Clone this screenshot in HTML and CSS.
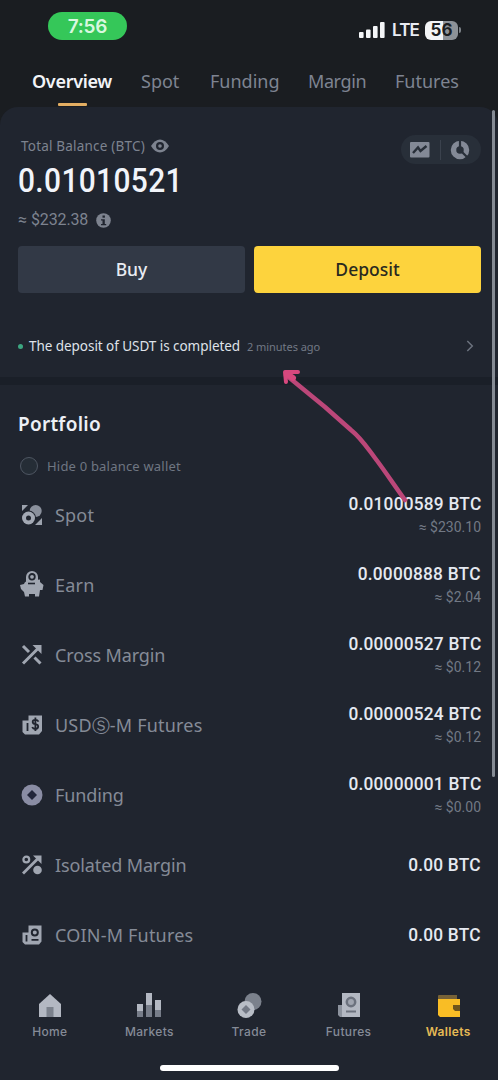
FILE: index.html
```html
<!DOCTYPE html>
<html lang="en">
<head>
<meta charset="utf-8">
<title>Wallets</title>
<link rel="stylesheet" href="styles.css">
</head>
<body>
<div class="screen">
  <header class="status">
    <div class="time">7:56</div>
    <div class="signals">
      <svg width="26" height="16" viewBox="0 0 26 16" fill="#f4f6f8"><rect x="0" y="10" width="4.600" height="6" rx="1"/><rect x="7" y="7.500" width="4.600" height="8.500" rx="1"/><rect x="14" y="4" width="4.600" height="12" rx="1"/><rect x="21" y="0" width="4.600" height="16" rx="1"/></svg>
      <span class="lte">LTE</span>
      <span class="battery">56</span>
      <span class="cap"></span>
    </div>
  </header>
  <nav class="tabs">
    <span class="tab active">Overview</span><span class="tab">Spot</span><span class="tab">Funding</span><span class="tab margin">Margin</span><span class="tab">Futures</span>
  </nav>
  <main class="panel">
    <section class="balance">
      <div class="head">
        <div class="total">Total Balance (BTC)
          <svg width="18" height="14" viewBox="0 0 18 14"><path d="M0 7Q4 .5 9 .5T18 7Q14 13.500 9 13.500T0 7Z" fill="#7d838f"/><circle cx="9" cy="7" r="4" fill="#20252f"/><circle cx="9" cy="7" r="1.800" fill="#7d838f"/></svg>
        </div>
        <div class="toggle">
          <svg width="20" height="16" viewBox="0 0 20 16"><rect width="19.500" height="15.500" rx="1" fill="#838996"/><path d="M3 11L8 5.500L10.500 9L16.500 4" fill="none" stroke="#282f39" stroke-width="2.400"/></svg>
          <i class="rule"></i>
          <svg width="20" height="20" viewBox="0 0 20 20"><circle cx="10" cy="10" r="6.500" fill="none" stroke="#838996" stroke-width="5.500"/><path d="M10 10V0M10 10L18 18" stroke="#282f39" stroke-width="2.200"/></svg>
        </div>
      </div>
      <div class="amount">0.01010521</div>
      <div class="fiat">≈ <span>$232.38</span>
        <svg width="15" height="15" viewBox="0 0 15 15"><circle cx="7.500" cy="7.500" r="7.300" fill="#7d838f"/><rect x="6.500" y="2.500" width="2.400" height="2.200" fill="#20252f"/><path d="M5 6.200H8.800V11H10.200V12.300H5V11H6.500V7.500H5Z" fill="#20252f"/></svg>
      </div>
      <div class="buttons"><div class="btn">Buy</div><div class="btn primary">Deposit</div></div>
      <div class="notice">
        <i class="dot"></i><span class="msg">The deposit of USDT is completed</span><span class="ago">2 minutes ago</span>
        <svg class="chev" width="8" height="12" viewBox="0 0 8 12"><path d="M1.300 1L6.300 6L1.300 11" fill="none" stroke="#6b727e" stroke-width="1.500"/></svg>
      </div>
    </section>
    <section class="portfolio">
      <h2>Portfolio</h2>
      <div class="hide"><i class="radio"></i><span>Hide 0 balance wallet</span></div>
      <div class="rows">
        <div class="row">
          <svg class="ico" viewBox="0 0 22 22"><circle cx="14.700" cy="7" r="6" fill="#8a909c"/><path d="M1 1H7L1 7ZM21 14V21H14Z" fill="#9ca2ad"/><circle cx="7.500" cy="14" r="7.600" fill="#20252f"/><circle cx="7.500" cy="14" r="6.500" fill="#a3a9b4"/><circle cx="7.500" cy="14" r="2.500" fill="#20252f"/></svg>
          <span class="name">Spot</span><div class="vals"><b>0.01000589 BTC</b><small>≈ $230.10</small></div>
        </div>
        <div class="row">
          <svg class="ico tall" viewBox="0 0 24 26"><path d="M6 14V6A6 6 0 0 1 18 6V14" fill="#a0a6b1"/><path d="M0 14L4 13Q5 9.500 10 9.500H16Q18 8.500 20 8.500V11L23.500 14L22.500 19H20L19 25.500H15V23H9V25.500H5L4 21L1 18Z" fill="#a0a6b1"/><circle cx="12" cy="5.800" r="2.800" fill="none" stroke="#20252f" stroke-width="1.800"/><path d="M8 12.500H15" stroke="#20252f" stroke-width="1.600"/></svg>
          <span class="name">Earn</span><div class="vals"><b>0.0000888 BTC</b><small>≈ $2.04</small></div>
        </div>
        <div class="row">
          <svg class="ico" viewBox="0 0 22 22"><path d="M2 2L8 8M13.500 13.500L19.500 19.500M2 19.500L17 4.500" stroke="#a0a6b1" stroke-width="3" fill="none"/><path d="M11.500 1H20.500V10Z" fill="#a0a6b1"/></svg>
          <span class="name tight">Cross Margin</span><div class="vals"><b>0.00000527 BTC</b><small>≈ $0.12</small></div>
        </div>
        <div class="row">
          <svg class="ico" viewBox="0 0 22 22"><path d="M7.500 1.500H21V17L18 20.500H4L1.500 18V6.500H7.500Z" fill="#a0a6b1"/><path d="M6.500 9V17" stroke="#20252f" stroke-width="1.800"/><path d="M17.500 7.600Q16.500 5.700 14.200 5.800Q11.500 6 11.700 8.200Q11.900 9.900 14.400 10.200Q17.300 10.600 17.200 12.700Q17 15 14.400 15Q12 15 11.200 13M14.400 3.500V17" stroke="#20252f" stroke-width="1.800" fill="none"/></svg>
          <span class="name">USD<em>Ⓢ</em>-M Futures</span><div class="vals"><b>0.00000524 BTC</b><small>≈ $0.12</small></div>
        </div>
        <div class="row">
          <svg class="ico" viewBox="0 0 22 22"><circle cx="11" cy="11" r="10.500" fill="#8a8da4"/><path d="M11 6L16 11L11 16L6 11Z" fill="#22263a"/></svg>
          <span class="name tight">Funding</span><div class="vals"><b>0.00000001 BTC</b><small>≈ $0.00</small></div>
        </div>
        <div class="row">
          <svg class="ico" viewBox="0 0 22 22"><path d="M2 19.500L16.500 5" stroke="#a0a6b1" stroke-width="2.800"/><path d="M12 1.500H20.500V10Z" fill="#a0a6b1"/><circle cx="5.300" cy="5.500" r="2.900" fill="none" stroke="#a0a6b1" stroke-width="2.200"/><circle cx="16.500" cy="16" r="4.300" fill="#a0a6b1"/></svg>
          <span class="name tight">Isolated Margin</span><div class="vals"><b>0.00 BTC</b></div>
        </div>
        <div class="row">
          <svg class="ico" viewBox="0 0 22 22"><path d="M7.500 1.500H20.500V17.500L18 20.500H4L1.500 18V8.500H7.500Z" fill="#a0a6b1"/><path d="M5.500 11V17.500M10.500 15.800H17.500" stroke="#20252f" stroke-width="1.800"/><circle cx="13.800" cy="8.500" r="3" fill="none" stroke="#20252f" stroke-width="2"/></svg>
          <span class="name">COIN-M Futures</span><div class="vals"><b>0.00 BTC</b></div>
        </div>
      </div>
    </section>
  </main>
  <footer class="bottom">
    <div class="item"><svg viewBox="0 0 26 26"><path d="M13 1L24 11V24H2V11Z" fill="#b3b8c2"/><rect x="9.500" y="14" width="7" height="10" fill="#7b818c"/></svg><span>Home</span></div>
    <div class="item"><svg viewBox="0 0 26 26"><path d="M1 11H7V20H1ZM10 0H16V14H10ZM19 7H25V19H19Z" fill="#b3b8c2"/><path d="M1 18H7V24H1ZM10 12H16V24H10ZM19 17H25V24H19Z" fill="#777d89"/></svg><span>Markets</span></div>
    <div class="item"><svg viewBox="0 0 26 26"><circle cx="17" cy="8.500" r="8.500" fill="#7b818c"/><circle cx="10" cy="16.500" r="8.500" fill="#b8bdc6"/><path d="M10 12L14.500 16.500L10 21L5.500 16.500Z" fill="#737985"/></svg><span>Trade</span></div>
    <div class="item"><svg viewBox="0 0 26 26"><path d="M2 12H7V24H4L2 22Z" fill="#8c929d"/><path d="M6 0H24V24H6Z" fill="#b3b8c2"/><circle cx="15" cy="9" r="4.200" fill="#a0a5b0" stroke="#6c727e" stroke-width="2.500"/><path d="M10 18.500H20" stroke="#6c727e" stroke-width="2"/></svg><span>Futures</span></div>
    <div class="item on"><svg viewBox="0 0 26 26"><path d="M3 6V3Q3 2 4 2H22V7Z" fill="#776237"/><path d="M3 6H25V24H5L3 22Z" fill="#f9bd25"/><path d="M18 12H25V18H20L18 16Z" fill="#6f551c"/></svg><span>Wallets</span></div>
  </footer>
  <div class="home-bar"></div>
  <div class="scrollbar"></div>
  <svg class="arrow" width="134" height="142" viewBox="0 0 134 142" fill="none" stroke="#bb4779" stroke-linecap="round" stroke-linejoin="round"><path d="M127 134C116 119 107 105 97 92C88 80 83 72 73 64L47 41L8 9" stroke-width="4.500"/><path d="M8 16L7 6L20 6" stroke="#d7487e" stroke-width="4"/><path d="M9 8L15 12" stroke="#d7487e" stroke-width="6"/></svg>
</div>
</body>
</html>
```
FILE: styles.css
```css
* { box-sizing: border-box; }
body { margin: 0; background: #1a1d21; font-family: "Noto Sans", sans-serif; color: #e9ecf2; }
.screen { position: relative; width: 498px; height: 1080px; overflow: hidden; display: flex; flex-direction: column; }
svg { display: block; flex: none; }
.status { height: 60px; display: flex; justify-content: space-between; padding: 12px 37px 0 48px; }
.time { width: 79px; height: 28px; border-radius: 14px; background: #35c759; color: #d8f8df; font: 600 19px/29px Inter, sans-serif; letter-spacing: -.3px; text-align: center; }
.signals { display: flex; align-items: center; height: 36px; }
.lte { width: 27px; margin-left: 7px; font: 600 17px/20px Inter, sans-serif; letter-spacing: -.9px; }
.battery { width: 33px; height: 19px; margin-left: 6px; border-radius: 6px; background: linear-gradient(90deg, #f2f4f6 56%, #8d9298 56%); color: #1a1d21; font: 700 17px/19px Inter, sans-serif; text-align: center; }
.cap { width: 2px; height: 6px; margin-left: 1px; border-radius: 0 2px 2px 0; background: #7d8288; }
.tabs { height: 47px; padding: 7px 0 0 32px; display: grid; grid-template-columns: 109px 69px 98px 87px 80px; }
.tab { color: #7e8491; font-size: 18px; line-height: 28px; letter-spacing: 0; white-space: nowrap; }
.tab.margin { letter-spacing: -.4px; }
.tab.active { color: #f2f4f8; font-weight: 600; letter-spacing: -.3px; position: relative; }
.tab.active::after { content: ""; position: absolute; left: 26px; top: 36px; width: 29px; height: 3px; border-radius: 1px; background: #e3ae62; }
.panel { flex: 1; background: #20252f; border-radius: 18px 18px 0 0; }
.balance { height: 270px; padding: 27px 17px 0 18px; }
.head { display: flex; justify-content: space-between; height: 33px; }
.total { display: flex; align-items: center; gap: 6px; height: 24px; padding-left: 3px; color: #7d838f; font-size: 13.500px; letter-spacing: .2px; }
.toggle { display: flex; align-items: center; justify-content: space-between; width: 80px; height: 29px; margin-top: 1px; padding: 0 11px 0 9px; border-radius: 15px; background: #282f39; }
.rule { width: 1px; height: 20px; background: #3b424d; }
.amount { height: 29px; color: #f1f4fa; font: 500 32.500px/29px Roboto, sans-serif; letter-spacing: .4px; transform: scaleX(.92); transform-origin: left; }
.fiat { display: flex; align-items: center; height: 24px; margin-top: 12px; color: #7d838f; font: 400 16px/20px Roboto, sans-serif; gap: 4px; }
.fiat span { width: 57px; letter-spacing: -.15px; margin-right: 4px; }
.buttons { display: grid; grid-template-columns: 1fr 1fr; gap: 9px; margin-top: 14px; }
.btn { height: 47px; border-radius: 4px; background: #323946; font-size: 17.500px; font-weight: 500; line-height: 47px; text-align: center; }
.primary { background: #fdd33d; color: #29291f; }
.notice { display: flex; align-items: center; height: 30px; margin-top: 38px; white-space: nowrap; }
.dot { width: 5px; height: 5px; border-radius: 50%; background: #3ca681; margin-right: 6px; }
.msg { width: 218px; color: #dfe2e9; font-size: 13.500px; letter-spacing: -.05px; }
.ago { color: #727985; font-size: 11px; letter-spacing: -.05px; }
.chev { margin: 0 7px 0 auto; }
.portfolio { border-top: 8px solid #1a1f28; padding: 25px 17px 0 18px; }
h2 { margin: 0; height: 28px; font-size: 19px; line-height: 28px; font-weight: 600; letter-spacing: .25px; color: #edf0f6; }
.hide { display: flex; align-items: center; gap: 9px; height: 30px; margin-top: 13px; padding-left: 2px; color: #6f7682; font-size: 13px; letter-spacing: .2px; }
.radio { width: 18px; height: 18px; border: 1px solid #4e5662; border-radius: 50%; background: #252d36; }
.rows { margin-top: -1px; }
.row { display: flex; align-items: center; height: 70px; }
.ico { width: 22px; height: 22px; margin: 0 12px 0 3px; }
.ico.tall { width: 24px; height: 26px; margin: -2px 11px 0 2px; }
.name { color: #858b97; font-size: 18px; letter-spacing: .2px; white-space: nowrap; }
.name.tight { letter-spacing: -.12px; }
em { font: normal 18px "DejaVu Sans", sans-serif; letter-spacing: 0; }
.vals { margin-left: auto; text-align: right; font-family: Roboto, sans-serif; }
.vals b { display: block; color: #e5e9f1; font-size: 18.500px; line-height: 24px; font-weight: 500; letter-spacing: .25px; transform: scaleX(.934); transform-origin: right; }
.vals small { display: block; color: #727985; font-size: 14px; line-height: 22px; }
.bottom { position: absolute; left: 0; top: 993px; width: 498px; display: grid; grid-template-columns: repeat(5, 1fr); }
.item { display: flex; flex-direction: column; align-items: center; color: #858b97; font: 500 12px/18px Inter, sans-serif; letter-spacing: .35px; }
.item svg { width: 26px; height: 26px; margin-bottom: 4px; }
.on { color: #e5ba55; font-weight: 600; }
.home-bar { position: absolute; left: 160px; top: 1065px; width: 179px; height: 6px; border-radius: 3px; background: #fff; }
.scrollbar { position: absolute; left: 492px; top: 110px; width: 3px; height: 667px; border-radius: 2px; background: #858b94; }
.arrow { position: absolute; left: 278px; top: 366px; }
```
